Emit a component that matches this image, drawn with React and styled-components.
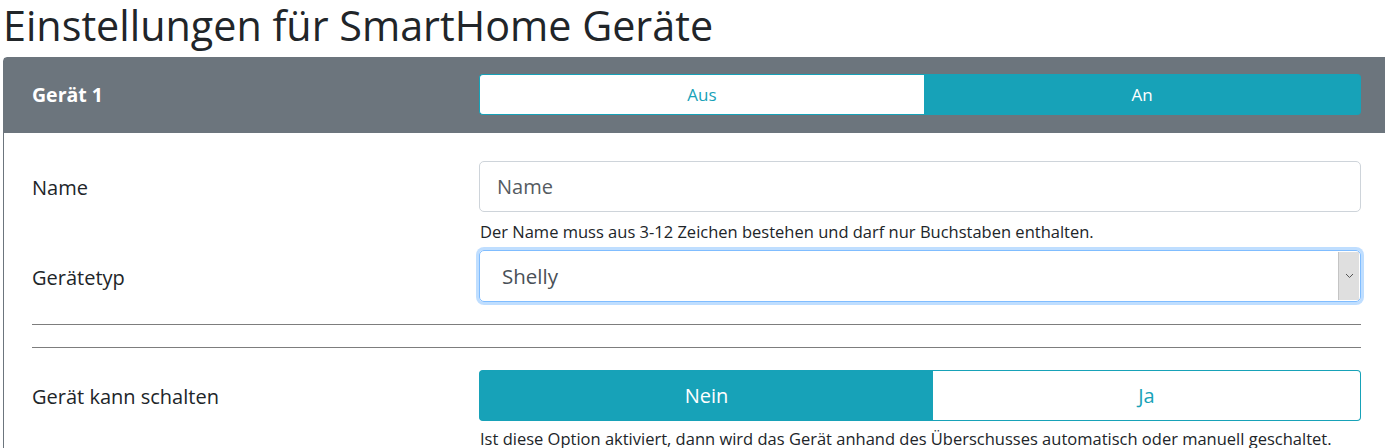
import React, { useState } from 'react';
import styled, { createGlobalStyle } from 'styled-components';

const GlobalStyle = createGlobalStyle`
	html, body {
		margin: 0;
		padding: 0;
		overflow: hidden;
		background: #ffffff;
	}
	body {
		font-family: 'Open Sans', 'Noto Sans', sans-serif;
		color: #212529;
	}
`;

const Page = styled.div`
	width: 1385px;
	padding-left: 3px;
	box-sizing: border-box;
`;

const Title = styled.h1`
	margin: 0 0 7px 0;
	font-size: 41.3px;
	font-weight: 400;
	line-height: 50px;
	color: #212529;
	white-space: nowrap;
`;

const Card = styled.div`
	width: 1387px;
	border: 1px solid #6c757d;
	border-radius: 4px 0 0 0;
	box-sizing: border-box;
`;

const CardHeader = styled.div`
	background: #6c757d;
	display: grid;
	grid-template-columns: 447px 882px;
	align-items: center;
	padding: 16px 28px 18px 28px;
`;

const HeaderTitle = styled.div`
	color: #ffffff;
	font-weight: 700;
	font-size: 19.5px;
`;

const CardBody = styled.div`
	padding: 28px 28px 0 28px;
	display: flex;
	flex-direction: column;
`;

const Row = styled.div`
	display: grid;
	grid-template-columns: 447px 882px;
	align-items: center;
	margin-top: ${(p) => p.$top || 0}px;
`;

const Label = styled.label`
	font-size: 20px;
	color: #212529;
	padding-top: 2px;
`;

const Toggle = styled.div`
	display: grid;
	grid-template-columns: ${(p) => p.$cols};
	height: ${(p) => p.$height}px;
`;

const ToggleBtn = styled.button`
	font-family: inherit;
	font-size: ${(p) => p.$size}px;
	border: 1px solid #17a2b8;
	background: ${(p) => (p.$active ? '#17a2b8' : '#ffffff')};
	color: ${(p) => (p.$active ? '#ffffff' : '#17a2b8')};
	padding: 0;
	cursor: pointer;
	border-radius: ${(p) => (p.$first ? '4px 0 0 4px' : '0 4px 4px 0')};
	${(p) => (p.$first ? 'border-right: none;' : 'border-left: none;')}
`;

const Input = styled.input`
	font-family: inherit;
	height: 51px;
	box-sizing: border-box;
	border: 1px solid #ced4da;
	border-radius: 5px;
	padding: 0 17px;
	font-size: 20px;
	color: #495057;
	outline: none;
	&::placeholder {
		color: #555b61;
	}
`;

const Help = styled.div`
	grid-column: 2;
	font-size: 16.5px;
	line-height: 24px;
	margin: ${(p) => p.$margin};
	color: #212529;
	white-space: nowrap;
`;

const SelectBox = styled.div`
	height: 52px;
	box-sizing: border-box;
	border: 1px solid #80bdff;
	border-radius: 5px;
	box-shadow: 0 0 0 3px rgba(0, 123, 255, 0.25);
	display: flex;
	align-items: stretch;
	overflow: hidden;
`;

const SelectValue = styled.div`
	flex: 1;
	display: flex;
	align-items: center;
	padding-left: 22px;
	font-size: 20.5px;
	color: #495057;
`;

const SelectArrow = styled.div`
	width: 20px;
	margin: 1px;
	background: #dfdfdf;
	border-left: 1px solid #c4c4c4;
	display: flex;
	align-items: center;
	justify-content: center;
`;

const Rule = styled.hr`
	margin: 22px 0 0 0;
	border: none;
	border-top: 1px solid #7d7d7d;
	height: 0;
`;

const App = () => {
	const [power, setPower] = useState('an');
	const [canSwitch, setCanSwitch] = useState('nein');
	const [name, setName] = useState('');

	return (
		<Page>
			<GlobalStyle />
			<Title>Einstellungen für SmartHome Geräte</Title>
			<Card>
				<CardHeader>
					<HeaderTitle>Gerät 1</HeaderTitle>
					<Toggle $cols="445px 437px" $height={41}>
						<ToggleBtn $first $size={17} $active={power === 'aus'} onClick={() => setPower('aus')}>
							Aus
						</ToggleBtn>
						<ToggleBtn $size={17} $active={power === 'an'} onClick={() => setPower('an')}>
							An
						</ToggleBtn>
					</Toggle>
				</CardHeader>
				<CardBody>
					<Row>
						<Label>Name</Label>
						<Input placeholder="Name" value={name} onChange={(e) => setName(e.target.value)} />
						<Help $margin="8px 0 6px 1px">
							Der Name muss aus 3-12 Zeichen bestehen und darf nur Buchstaben enthalten.
						</Help>
					</Row>
					<Row>
						<Label>Gerätetyp</Label>
						<SelectBox>
							<SelectValue>Shelly</SelectValue>
							<SelectArrow>
								<svg width="9" height="6" viewBox="0 0 9 6">
									<path d="M1 1 L4.5 4.5 L8 1" fill="none" stroke="#555" strokeWidth="1" />
								</svg>
							</SelectArrow>
						</SelectBox>
					</Row>
					<Rule />
					<Rule />
					<Row $top={22}>
						<Label>Gerät kann schalten</Label>
						<Toggle $cols="454px 428px" $height={51}>
							<ToggleBtn $first $size={20} $active={canSwitch === 'nein'} onClick={() => setCanSwitch('nein')}>
								Nein
							</ToggleBtn>
							<ToggleBtn $size={20} $active={canSwitch === 'ja'} onClick={() => setCanSwitch('ja')}>
								Ja
							</ToggleBtn>
						</Toggle>
						<Help $margin="6px 0 0 1px">
							Ist diese Option aktiviert, dann wird das Gerät anhand des Überschusses automatisch oder manuell geschaltet.
						</Help>
					</Row>
				</CardBody>
			</Card>
		</Page>
	);
};

export default App;
